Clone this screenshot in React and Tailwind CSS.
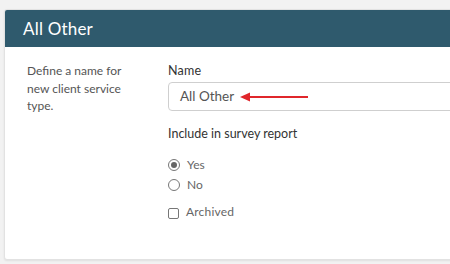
export default function App() {
  const font = { fontFamily: "Lato, 'Noto Sans', sans-serif" };
  return (
    <div className="w-[450px] h-[264px] overflow-hidden bg-[#f2f2f2] pt-[9px] pl-[4px]" style={font}>
      <div className="w-[470px] h-[251px] bg-white rounded-t-[3px] rounded-b-[3px] border border-[#e2e2e2] shadow-[0_1px_2px_rgba(0,0,0,0.08)] overflow-hidden">
        <div className="h-[37px] bg-[#2f5a6d] flex items-center pl-[18px] text-white text-[17px] tracking-[0.2px]">
          All Other
        </div>
        <div className="flex pt-[15px]">
          <div className="w-[163px] pl-[22px] pr-[22px] text-[12px] leading-[17.5px] text-[#555]">
            Define a name for new client service type.
          </div>
          <div className="flex-1 flex flex-col">
            <div className="text-[12.5px] leading-[17px] text-[#333] tracking-[0.2px]">Name</div>
            <div className="relative mt-[3px] h-[29px] border border-[#cfcfcf] rounded-[4px] flex items-center pl-[11px] text-[13.5px] text-[#555]">
              All Other
              <svg className="absolute left-[71px] top-[9px]" width="70" height="10" viewBox="0 0 70 10">
                <line x1="7" y1="5" x2="68" y2="5" stroke="#e0262b" strokeWidth="2" />
                <polygon points="0,5 10,0.5 10,9.5" fill="#e0262b" />
              </svg>
            </div>
            <div className="mt-[14px] text-[12.5px] leading-[17px] text-[#333]">Include in survey report</div>
            <div className="mt-[15px] flex items-center h-[16px] text-[12px] text-[#666]">
              <span className="w-[12px] h-[12px] rounded-full border border-[#777] flex items-center justify-center">
                <span className="w-[6px] h-[6px] rounded-full bg-[#666]"></span>
              </span>
              <span className="ml-[7px]">Yes</span>
            </div>
            <div className="mt-[4px] flex items-center h-[16px] text-[12px] text-[#666]">
              <span className="w-[12px] h-[12px] rounded-full border border-[#777]"></span>
              <span className="ml-[7px]">No</span>
            </div>
            <div className="mt-[11px] flex items-center h-[16px] text-[12px] text-[#666]">
              <span className="w-[11px] h-[11px] rounded-[2px] border border-[#777] mt-[2px]"></span>
              <span className="ml-[7px] tracking-[0.2px]">Archived</span>
            </div>
          </div>
        </div>
      </div>
    </div>
  );
}
